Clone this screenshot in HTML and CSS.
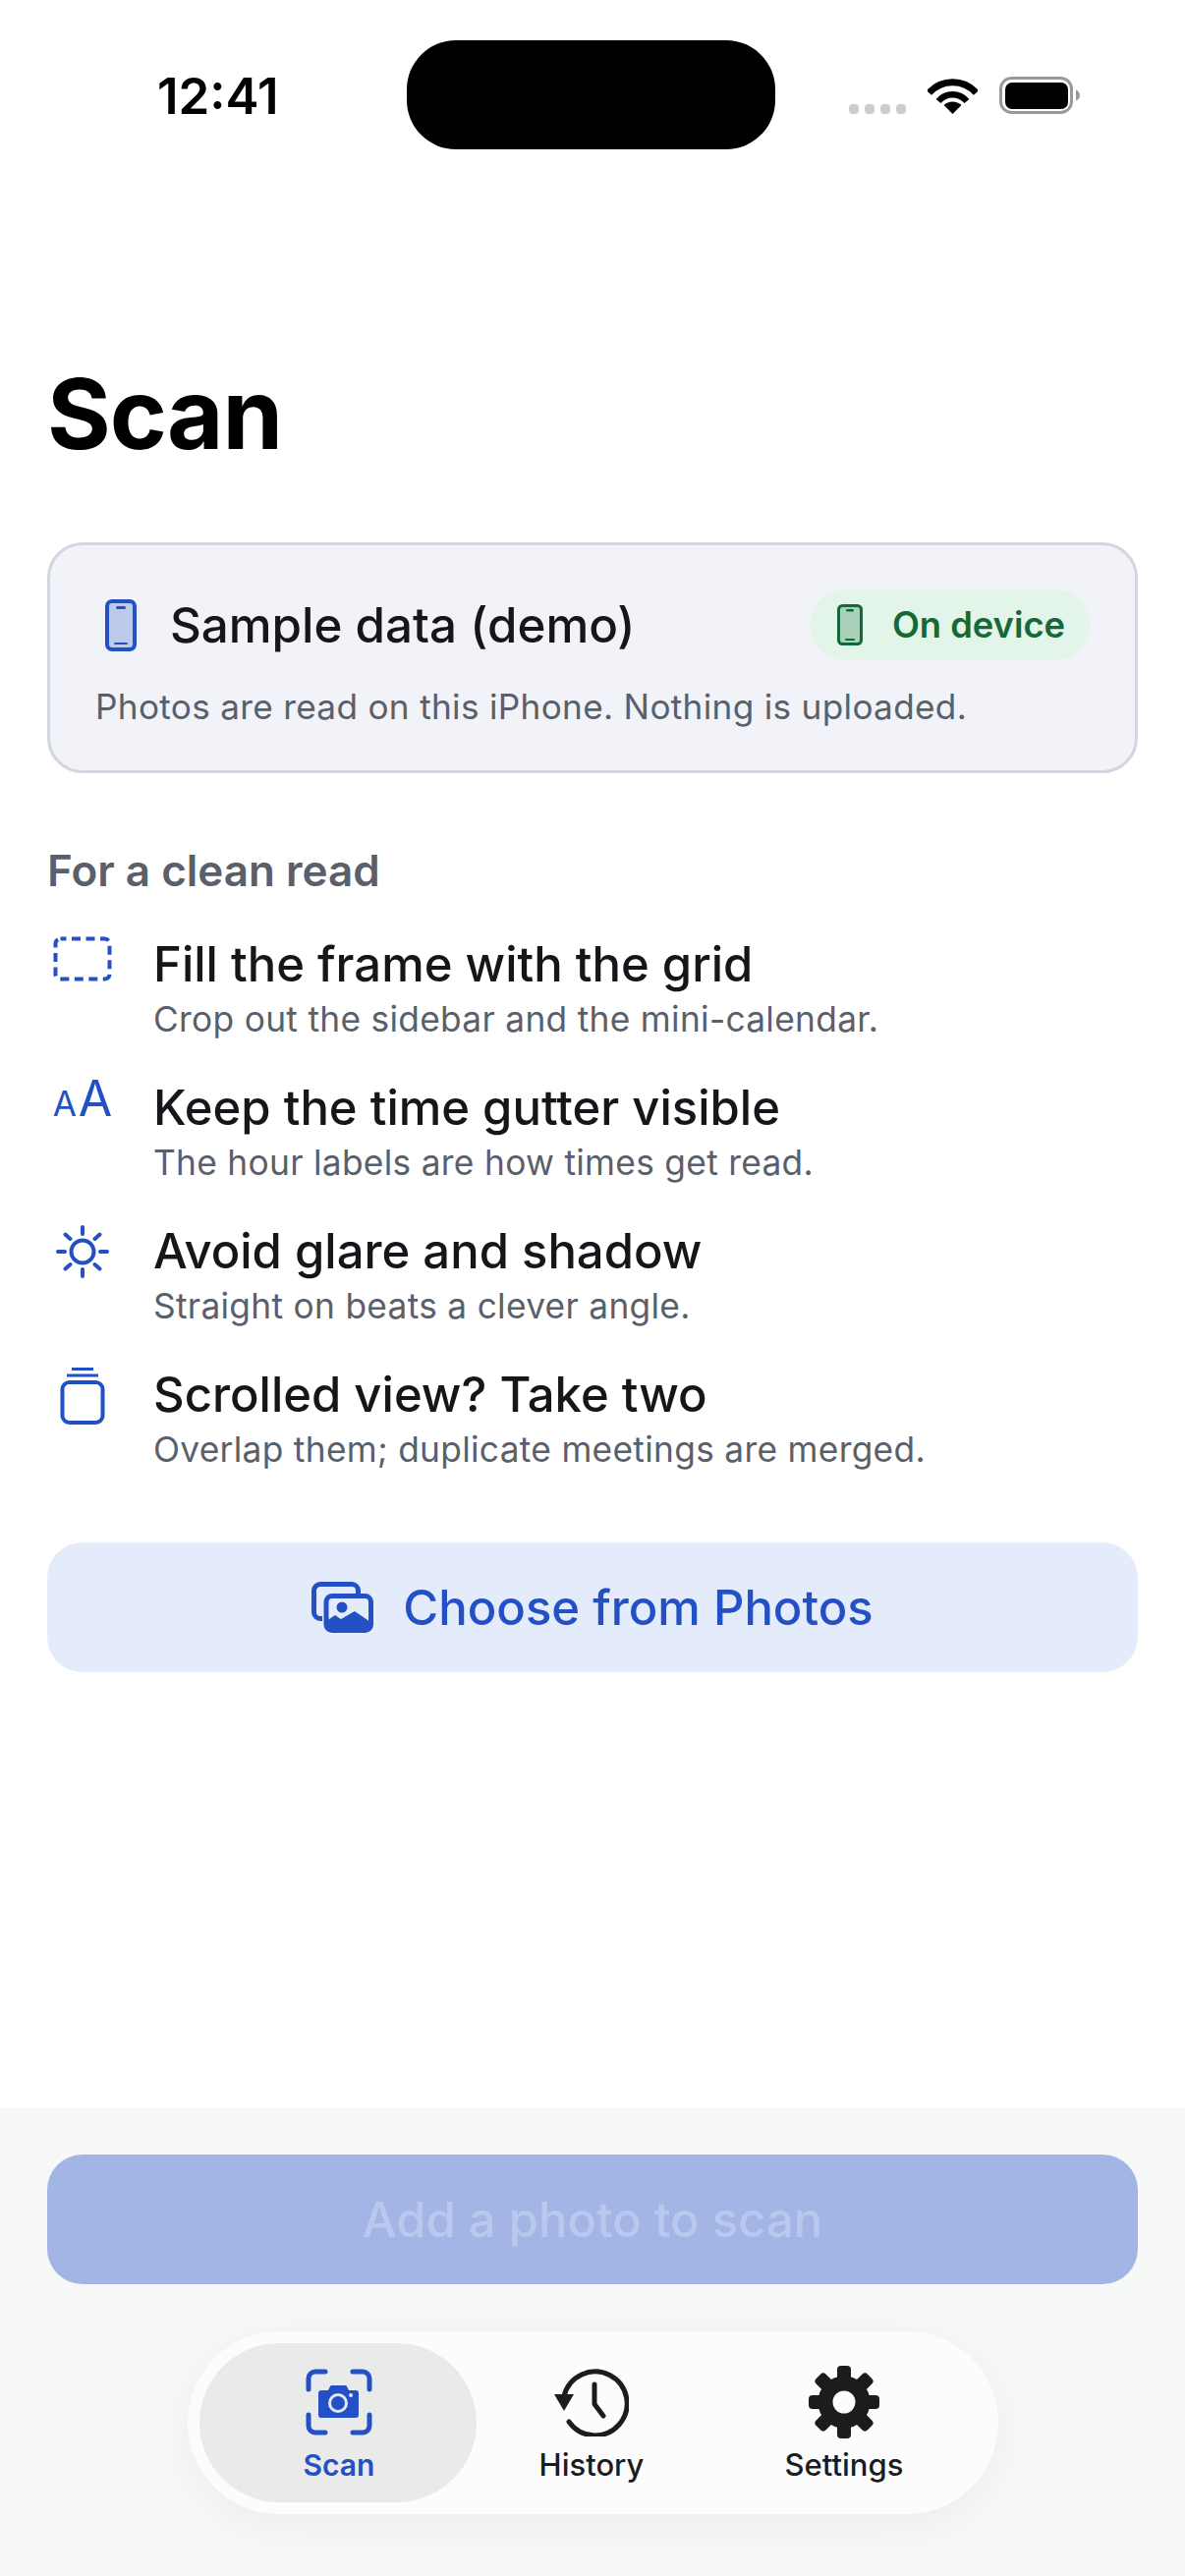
FILE: index.html
```
<!DOCTYPE html>
<html lang="en">
<head>
<meta charset="utf-8">
<title>Scan</title>
<link rel="stylesheet" href="styles.css">
</head>
<body>
<div class="page">
  <header class="status">
    <div class="time">12:41</div>
    <div class="island"></div>
    <div class="status-icons">
      <svg class="dots" width="58" height="10" viewBox="0 0 58 10"><rect x="0" width="10" height="10" rx="4"/><rect x="16" width="10" height="10" rx="4"/><rect x="32" width="10" height="10" rx="4"/><rect x="48" width="10" height="10" rx="4"/></svg>
      <svg class="wifi" width="51" height="38" viewBox="0 0 51 38"><path d="M1.5 16.5A32 32 0 0 1 49.5 16.5" fill="none" stroke="#000" stroke-width="7"/><path d="M11 25A19 19 0 0 1 40 25" fill="none" stroke="#000" stroke-width="6.5"/><path d="M25.5 38L16.5 29A13 13 0 0 1 34.5 29Z"/></svg>
      <svg class="battery" width="83" height="38" viewBox="0 0 83 38"><rect x="1.5" y="1.5" width="72" height="35" rx="11" fill="none" stroke="#999" stroke-width="3"/><rect x="6" y="6" width="64" height="27" rx="7"/><path d="M78 13.5q4 2 4 5.5t-4 5.500z" fill="#999"/></svg>
    </div>
  </header>

  <main class="main">
    <h1 class="title">Scan</h1>

    <section class="card">
      <div class="card-head">
        <svg class="phone" width="32" height="53" viewBox="0 0 32 53"><rect x="2" y="2" width="28" height="49" rx="5" fill="#bccaeb" stroke="#2351c5" stroke-width="4"/><rect x="11" y="7" width="10" height="3" rx="1.500" fill="#2351c5"/><rect x="9" y="44" width="14" height="2" rx="1" fill="#2351c5"/></svg>
        <div class="card-title">Sample data (demo)</div>
        <div class="badge">
          <svg class="badge-phone" width="26" height="42" viewBox="0 0 26 42"><rect x="1.500" y="1.500" width="23" height="39" rx="4" fill="#a9d0b8" stroke="#14693b" stroke-width="3"/><rect x="9" y="5" width="8" height="2.500" rx="1.200" fill="#14693b"/><rect x="8" y="35" width="10" height="2" rx="1" fill="#14693b"/></svg>
          <span>On device</span>
        </div>
      </div>
      <p class="card-sub">Photos are read on this iPhone. Nothing is uploaded.</p>
    </section>

    <h2 class="section-label">For a clean read</h2>

    <ul class="tips">
      <li class="tip">
        <div class="tip-icon tip-icon-high"><svg width="60" height="46" viewBox="0 0 60 46"><rect x="2.500" y="2.500" width="55" height="41" rx="5" fill="none" stroke="#2351c5" stroke-width="4" stroke-dasharray="9 5.500" stroke-dashoffset="3"/></svg></div>
        <div><div class="tip-title">Fill the frame with the grid</div><div class="tip-sub">Crop out the sidebar and the mini-calendar.</div></div>
      </li>
      <li class="tip">
        <div class="tip-icon tip-icon-higher"><div class="aa"><span class="aa-s">A</span><span class="aa-l">A</span></div></div>
        <div><div class="tip-title">Keep the time gutter visible</div><div class="tip-sub">The hour labels are how times get read.</div></div>
      </li>
      <li class="tip">
        <div class="tip-icon"><svg width="56" height="56" viewBox="0 0 56 56" fill="none" stroke="#2351c5" stroke-width="4" stroke-linecap="round"><circle cx="28" cy="28" r="11.500"/><path d="M28 3v7M28 46v7M3 28h7M46 28h7M10.500 10.500l5 4.500M40.500 41l5 4.500M10.500 45.500l5-4.500M40.500 15l5-4.500"/></svg></div>
        <div><div class="tip-title">Avoid glare and shadow</div><div class="tip-sub">Straight on beats a clever angle.</div></div>
      </li>
      <li class="tip">
        <div class="tip-icon"><svg width="46" height="60" viewBox="0 0 46 60" fill="none" stroke="#2351c5"><rect x="2.500" y="17" width="41" height="41" rx="7" stroke-width="4"/><path d="M7 10h32" stroke-width="3"/><path d="M12 3.500h22" stroke-width="3"/></svg></div>
        <div><div class="tip-title">Scrolled view? Take two</div><div class="tip-sub">Overlap them; duplicate meetings are merged.</div></div>
      </li>
    </ul>

    <button class="choose">
      <svg width="63" height="52" viewBox="0 0 63 52"><path d="M11 37.500H9a6.500 6.500 0 0 1-6.500-6.500V9A6.500 6.500 0 0 1 9 2.500H41a6.500 6.500 0 0 1 6.500 6.500V12" fill="none" stroke="#2351c5" stroke-width="5"/><rect x="15" y="14.500" width="45.500" height="35" rx="6" fill="none" stroke="#2351c5" stroke-width="5"/><circle cx="31" cy="26" r="5.500" fill="#2351c5"/><path d="M15 40l9-6 6 4 14-8 16 11v5a6 6 0 0 1-6 4H21a6 6 0 0 1-6-4z" fill="#2351c5"/></svg>
      <span>Choose from Photos</span>
    </button>
  </main>

  <footer class="footer">
    <button class="add" disabled>Add a photo to scan</button>
    <nav class="tabs">
      <a class="tab tab-active">
        <div class="tab-icon"><svg width="68" height="68" viewBox="0 0 68 68"><path d="M3 21V10a7 7 0 0 1 7-7h10M48 3h10a7 7 0 0 1 7 7v11M3 47v11a7 7 0 0 0 7 7h10M48 65h10a7 7 0 0 0 7-7V47" fill="none" stroke="#2351c5" stroke-width="5" stroke-linecap="round"/><path d="M16 22h7l2-4a2 2 0 0 1 2-1h13a2 2 0 0 1 2 1l2 4h7a3 3 0 0 1 3 3v22a3 3 0 0 1-3 3H16a3 3 0 0 1-3-3V25a3 3 0 0 1 3-3z" fill="#2351c5"/><circle cx="33" cy="35" r="8.500" fill="none" stroke="#e3e8f6" stroke-width="3"/><circle cx="46" cy="27" r="2" fill="#e3e8f6"/></svg></div>
        <span>Scan</span>
      </a>
      <a class="tab">
        <div class="tab-icon"><svg width="76" height="70" viewBox="0 0 76 70" fill="none" stroke="#1c1c1e" stroke-width="5" stroke-linecap="round" stroke-linejoin="round"><path d="M10 29A32.500 32.500 0 1 1 15 55"/><path d="M41 17V37L50 49"/><path d="M0 27H20L10 44Z" fill="#1c1c1e" stroke="none"/></svg></div>
        <span>History</span>
      </a>
      <a class="tab">
        <div class="tab-icon"><svg width="72" height="74" viewBox="0 0 72 74"><g fill="#1c1c1e"><rect x="29" y="0" width="14" height="16" rx="4"/><rect x="29" y="58" width="14" height="16" rx="4"/><rect x="0" y="30" width="16" height="14" rx="4"/><rect x="56" y="30" width="16" height="14" rx="4"/><rect x="29" y="0" width="14" height="16" rx="4" transform="rotate(45 36 37)"/><rect x="29" y="0" width="14" height="16" rx="4" transform="rotate(135 36 37)"/><rect x="29" y="0" width="14" height="16" rx="4" transform="rotate(225 36 37)"/><rect x="29" y="0" width="14" height="16" rx="4" transform="rotate(315 36 37)"/></g><circle cx="36" cy="37" r="19" fill="none" stroke="#1c1c1e" stroke-width="15"/></svg></div>
        <span>Settings</span>
      </a>
    </nav>
  </footer>
</div>
</body>
</html>
```
FILE: styles.css
```
* { box-sizing: border-box; }
html, body { margin: 0; padding: 0; background: #fff; }
body { font-family: Inter, "Liberation Sans", sans-serif; color: #14161a; }
.page { width: 1206px; height: 2622px; display: flex; flex-direction: column; overflow: hidden; }

.status { height: 152px; padding: 41px 106px 0 160px; display: flex; align-items: flex-start; }
.time { font-size: 51px; font-weight: 600; line-height: 40px; margin-top: 37px; width: 255px; color: #000; }
.island { width: 377px; height: 111px; border-radius: 50px; background: #000; }
.status-icons { margin-left: 75px; margin-top: 37px; display: flex; align-items: flex-end; height: 38px; }
.dots { fill: #cdcdcd; }
.wifi { margin-left: 22px; }
.battery { margin-left: 22px; }

.main { flex: 1; padding: 0 48px; display: flex; flex-direction: column; }
.title { margin: 211px 0 0; font-size: 99px; line-height: 116px; font-weight: 700; color: #000; letter-spacing: -1px; }
.card { margin-top: 73px; height: 235px; border: 3px solid #d3d6de; border-radius: 36px; background: #f1f3f8; padding: 45px 46px 0 46px; }
.card-head { display: flex; align-items: center; height: 72px; padding-left: 10px; }
.phone { flex: none; }
.card-title { font-size: 49.3px; font-weight: 450; margin-left: 34px; flex: 1; color: #14161a; }
.badge { height: 72px; padding: 0 25px 0 28px; border-radius: 36px; background: #e3f4e8; color: #14693b; font-size: 36.3px; font-weight: 600; display: flex; align-items: center; gap: 30px; }
.card-sub { margin: 22px 0 0; font-size: 35.2px; line-height: 50px; color: #5a5f6c; letter-spacing: 0.3px; }

.section-label { margin: 69px 0 0; font-size: 44px; line-height: 60px; font-weight: 600; color: #5a5f6c; }
.tips { list-style: none; margin: 35px 0 0; padding: 0; display: flex; flex-direction: column; gap: 32px; }
.tip { display: flex; height: 114px; }
.tip-icon { flex: none; width: 72px; height: 62px; margin-right: 36px; display: flex; align-items: center; justify-content: center; }
.tip-icon-high { padding-bottom: 12px; }
.tip-icon-higher { padding-bottom: 20px; }
.tip-title { font-size: 49px; font-weight: 450; line-height: 62px; color: #14161a; }
.tip-sub { font-size: 35.3px; line-height: 50px; color: #5a5f6c; letter-spacing: 0.3px; }
.aa { display: flex; align-items: baseline; color: #2351c5; gap: 2px; font-weight: 400; }
.aa-s { font-size: 35px; }
.aa-l { font-size: 50px; }

.choose { margin-top: 67px; height: 132px; border: 0; border-radius: 36px; background: #e4ebfb; color: #2351c5; font: inherit; font-size: 49px; font-weight: 450; display: flex; align-items: center; justify-content: center; gap: 30px; }

.footer { height: 477px; background: #f7f8f8; padding: 48px 48px 0; display: flex; flex-direction: column; align-items: center; }
.add { width: 1110px; height: 132px; flex: none; border: 0; border-radius: 36px; background: #a3b5e4; color: #b9c8ee; font: inherit; font-size: 49px; font-weight: 450; }
.tabs { margin-top: 48px; width: 825px; height: 186px; border-radius: 93px; background: #fcfcfc; padding: 12px; display: flex; box-shadow: 0 12px 50px rgba(0, 0, 0, 0.05); }
.tab { flex: none; width: 282px; height: 162px; margin-right: -25px; padding: 24px 0 0 3px; border-radius: 81px; display: flex; flex-direction: column; align-items: center; color: #1c1c1e; font-size: 31px; font-weight: 500; }
.tab-icon { height: 72px; display: flex; align-items: center; justify-content: center; }
.tab span { margin-top: 9px; line-height: 38px; }
.tab-active { background: #e9eaea; color: #2351c5; font-size: 30px; font-weight: 600; }
```
